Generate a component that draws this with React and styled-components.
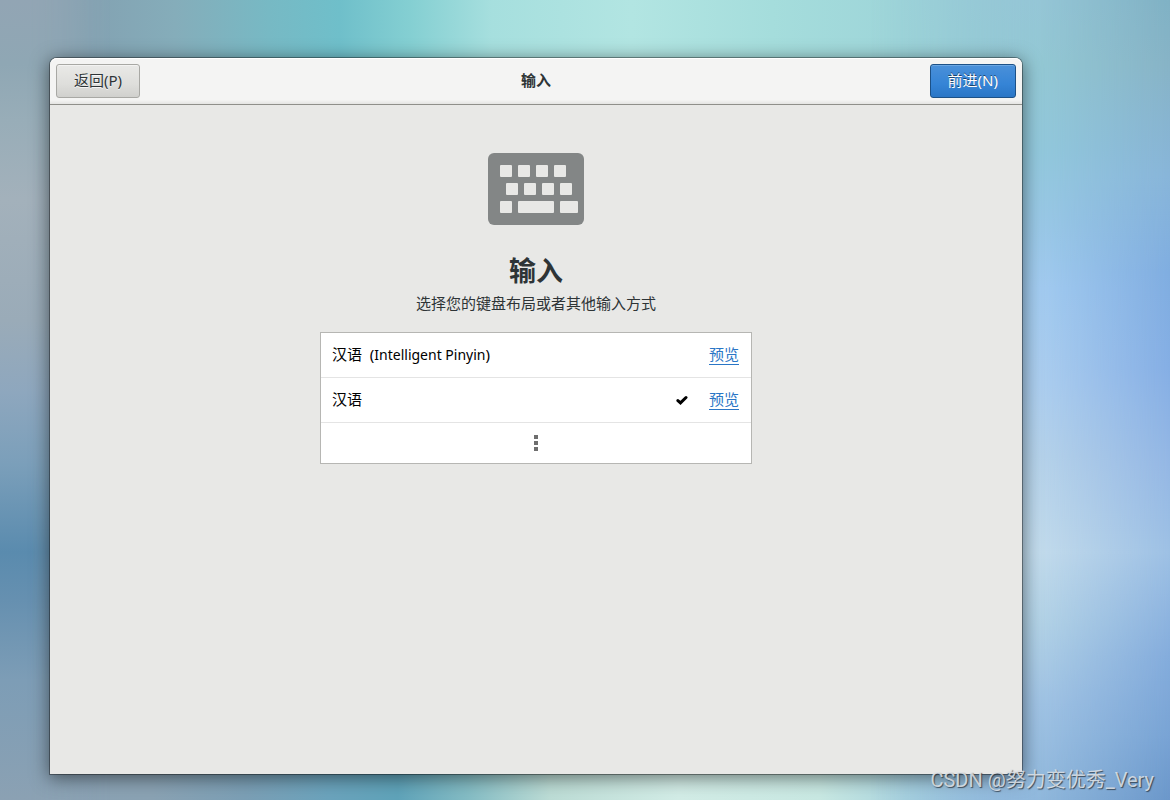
import React, {useState} from 'react'
import styled, {createGlobalStyle} from 'styled-components'

const GlobalStyle = createGlobalStyle`
    * {
        box-sizing: border-box;
    }
    body {
        margin: 0;
        font-family: "Noto Sans", "Noto Sans CJK SC", sans-serif;
        font-size: 15px;
        color: #2e3436;
    }
`;

const Desktop = styled.div`
    position: relative;
    isolation: isolate;
    overflow: hidden;
    display: flex;
    min-height: 100vh;
    padding: 58px 148px 26px 50px;
`;

// one soft colour band of the wallpaper, faded out with a mask
const Glow = styled.div`
    position: absolute;
    inset: 0;
    z-index: -1;
    background: linear-gradient(${props => props.$colors});
    mask-image: ${props => props.$fade ? `linear-gradient(${props.$fade})` : 'none'};
`;

const Window = styled.main`
    flex: 1;
    display: flex;
    flex-direction: column;
    min-width: 0;
    background: #e8e8e6;
    border-radius: 7px 7px 0 0;
    box-shadow: 0 0 0 1px rgba(0, 0, 0, 0.35), 0 3px 18px 1px rgba(0, 0, 0, 0.5);
`;

const HeaderBar = styled.header`
    display: grid;
    grid-template-columns: 1fr auto 1fr;
    align-items: center;
    height: 47px;
    padding: 0 6px;
    background: linear-gradient(#f4f4f3 42px, #e4e4e2);
    border-bottom: 1px solid #8f8f8a;
    border-radius: 7px 7px 0 0;
    box-shadow: inset 0 1px #ffffff;
`;

const Title = styled.h1`
    margin: 0;
    padding-bottom: 2px;
    font-size: 15px;
    line-height: 20px;
    font-weight: 700;
`;

const Button = styled.button`
    justify-self: ${props => props.$primary ? 'end' : 'start'};
    height: 34px;
    padding: 0 17px 2px;
    border: 1px solid ${props => props.$primary ? '#1c5187' : '#a8a8a4'};
    border-radius: 3px;
    background: ${props => props.$primary
        ? 'linear-gradient(#4a90d9, #3584d6 60%, #2a76c6)'
        : 'linear-gradient(#e9e9e7, #dededb 60%, #d0d0cd)'};
    box-shadow: inset 0 1px ${props => props.$primary ? '#6aa6e2' : '#f3f3f2'};
    color: ${props => props.$primary ? '#ffffff' : '#2e3436'};
    text-shadow: ${props => props.$primary ? '0 -1px rgba(0, 0, 0, 0.5)' : '0 1px rgba(255, 255, 255, 0.75)'};
    font: inherit;
    line-height: 20px;
`;

const Content = styled.section`
    display: flex;
    flex-direction: column;
    align-items: center;
    padding: 48px 24px;
`;

const Heading = styled.h2`
    margin: 26px 0 0;
    font-size: 27px;
    line-height: 40px;
    font-weight: 700;
`;

const Hint = styled.p`
    margin: 0 0 17px;
    line-height: 24px;
`;

const List = styled.div`
    width: 100%;
    max-width: 432px;
    background: #ffffff;
    border: 1px solid #b6b6b3;
    color: #000000;
`;

const Row = styled.div`
    display: flex;
    align-items: center;
    gap: 21px;
    height: 45px;
    padding: 0 12px 0 11px;
    border-bottom: 1px solid #e4e4e4;
`;

const Choice = styled.label`
    flex: 1;
    display: flex;
    align-items: center;
    line-height: 20px;
    white-space: pre;
`;

const Name = styled.span`
    padding-bottom: 2px;
`;

const Latin = styled.span`
    font-size: 14px;
`;

const Radio = styled.input`
    appearance: none;
    width: 0;
    height: 0;
    margin: 0 0 0 auto;
`;

const Check = styled.svg`
    visibility: hidden;

    ${Radio}:checked + & {
        visibility: visible;
    }
`;

const Preview = styled.a`
    color: #2a76c6;
    line-height: 19px;
    border-bottom: 1px solid #2a76c6;
    text-decoration: none;
`;

const More = styled.button`
    display: flex;
    align-items: center;
    justify-content: center;
    width: 100%;
    height: 40px;
    padding: 0;
    border: 0;
    background: none;
`;

const Watermark = styled.div`
    position: absolute;
    right: 16px;
    bottom: 6px;
    font-family: Roboto, "Noto Sans CJK SC", sans-serif;
    font-size: 20px;
    line-height: 28px;
    color: rgba(225, 229, 233, 0.85);
    text-shadow: 1px 1px 1px rgba(40, 50, 60, 0.8);
`;

const topColors = `to right, #92a5b4, #83a2b2 90px, #85adba 15%, #77b9c4 23%, #6fbfca 29%,
    #84cfd2 35%, #a6dfde 42%, #b2e5e2 54%, #a5dddc 66%, #9cd3d8 80%, #92c4d3 90%, #81b2c6`;
const bottomColors = `to right, #8ba2b4, #8aa2b3 13%, #7b9fb5 21%, #6ba3bc 28%, #5fa3b9 34%,
    #84bcc4 40%, #bcdcd5 47%, #d2ece6 58%, #c8e8e2 70%, #a8d3de 78%, #93bcdd 86%, #6b97cc`;
const leftColors = `#92a5b4, #8fa7b4 8%, #98adb8 15%, #a3b1bb 25%, #9aabb8 40%, #8ea7be 49%,
    #7b9fba 58%, #5a8bae 69%, #6690b0 75%, #7d9db6 85%, #8ba1b3`;
const rightColors = `#95c6d6, #93c8d4 8%, #92c8dc 19%, #99c8e6 28%, #a2cbf0 36%, #acceef 48%,
    #b5d2ea 57%, #c2dbec 69%, #b2d2e6 78%, #a0c3e4 88%, #90b8dc`;
const edgeColors = `#80b1c4, #87b3c6 8%, #88b5d9 22%, #80ade0 34%, #85aee4 46%, #94b7e4 58%,
    #9dc0e4 69%, #84acdc 82%, #78a3d4 92%, #6b97ca`;

const layouts = [
    {id: 'pinyin', name: '汉语', latin: 'Intelligent Pinyin'},
    {id: 'cn', name: '汉语'},
];

// x, y and width of every key, all of them 12 high
const keys = [
    [12, 12, 12], [30, 12, 12], [48, 12, 12], [66, 12, 12],
    [18, 30, 12], [36, 30, 12], [54, 30, 12], [72, 30, 12],
    [12, 48, 12], [30, 48, 36], [72, 48, 18],
];

const KeyboardIcon = () => (
    <svg width="96" height="72" viewBox="0 0 96 72" aria-hidden="true">
        <rect width="96" height="72" rx="6" fill="#838686" />
        {keys.map(([x, y, width]) => (
            <rect key={`${x}-${y}`} x={x} y={y} width={width} height="12" rx="1" fill="#e8e8e6" />
        ))}
    </svg>
);

const App = () => {
    const [selected, setSelected] = useState('cn');

    return (
        <Desktop>
            <GlobalStyle />
            <Glow $colors={topColors} />
            <Glow $colors={bottomColors} $fade="transparent 30%, #000 98%" />
            <Glow $colors={leftColors} $fade="to right, #000 30px, transparent 110px" />
            <Glow $colors={rightColors} $fade="to left, #000 130px, transparent 300px" />
            <Glow $colors={edgeColors} $fade="to left, #000, transparent 130px" />

            <Window>
                <HeaderBar>
                    <Button type="button">返回(P)</Button>
                    <Title>输入</Title>
                    <Button type="button" $primary>前进(N)</Button>
                </HeaderBar>

                <Content>
                    <KeyboardIcon />
                    <Heading>输入</Heading>
                    <Hint>选择您的键盘布局或者其他输入方式</Hint>

                    <List>
                        {layouts.map(({id, name, latin}) => (
                            <Row key={id}>
                                <Choice>
                                    <Name>
                                        {name}
                                        {latin && <>{'  ('}<Latin>{latin}</Latin>)</>}
                                    </Name>
                                    <Radio
                                        type="radio"
                                        name="layout"
                                        checked={selected === id}
                                        onChange={() => setSelected(id)}
                                    />
                                    <Check width="12" height="10" viewBox="0 0 12 10">
                                        <path d="M1.9 5.6 4.5 7.9 10 2.5" fill="none" stroke="#000" strokeWidth="3" strokeLinecap="round" />
                                    </Check>
                                </Choice>
                                <Preview href="#preview">预览</Preview>
                            </Row>
                        ))}
                        <More type="button" aria-label="更多">
                            <svg width="4" height="16" viewBox="0 0 4 16" fill="#6e6e6e">
                                <rect width="4" height="4" />
                                <rect y="6" width="4" height="4" />
                                <rect y="12" width="4" height="4" />
                            </svg>
                        </More>
                    </List>
                </Content>
            </Window>

            <Watermark>CSDN @努力变优秀_Very</Watermark>
        </Desktop>
    )
}

export default App;
